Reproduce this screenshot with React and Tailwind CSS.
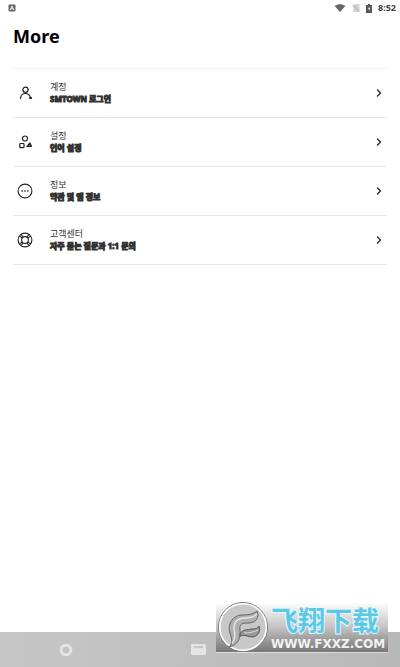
import { ChevronRight } from 'lucide-react';

function AccountIcon() {
  return (
    <svg viewBox="0 0 16 16" className="size-4" fill="none" stroke="#222" strokeWidth="1.2" strokeLinecap="round">
      <circle cx="8.500" cy="4.800" r="2.600" />
      <path d="M3.500 13.500c.2-3.500 2.200-5 5-5s4.200 1.500 5 4" />
      <path d="M13 13h1.200" strokeWidth="2" />
    </svg>
  );
}

function ShapesIcon() {
  return (
    <svg viewBox="0 0 16 16" className="size-4" fill="none" stroke="#222" strokeWidth="1.2" strokeLinejoin="round">
      <circle cx="8" cy="4.500" r="2.500" />
      <rect x="2.800" y="9.500" width="4.200" height="4.200" rx=".8" />
      <path d="M10 12.500l3-3.500 1.500 3.500z" fill="#777" />
    </svg>
  );
}

function InfoIcon() {
  return (
    <svg viewBox="0 0 16 16" className="size-4" fill="none" stroke="#222" strokeWidth="1.1" strokeLinecap="round">
      <circle cx="8" cy="8" r="6.900" />
      <path d="M5 8h.4M7.800 8h.4M10.600 8h.4" strokeWidth="1.300" />
    </svg>
  );
}

function SupportIcon() {
  return (
    <svg viewBox="0 0 16 16" className="size-4" fill="none" stroke="#222" strokeWidth="1.1">
      <circle cx="8" cy="8" r="6.900" />
      <circle cx="8" cy="8" r="3.400" />
      <path d="M2.800 4.400l2.500 1.600M4.400 2.800L6 5.300M11.600 2.800L10 5.300M13.200 4.400l-2.500 1.600M2.800 11.600l2.500-1.600M4.400 13.200L6 10.700M11.600 13.200L10 10.700M13.200 11.600l-2.500-1.600" />
    </svg>
  );
}

const menu = [
  { title: '계정', text: 'SMTOWN 로그인', Icon: AccountIcon },
  { title: '설정', text: '언어 설정', Icon: ShapesIcon },
  { title: '정보', text: '약관 및 앱 정보', Icon: InfoIcon },
  { title: '고객센터', text: '자주 묻는 질문과 1:1 문의', Icon: SupportIcon },
];

function StatusBar() {
  return (
    <div className="flex h-4 items-center justify-between pr-1 pl-2">
      <svg viewBox="0 0 8 8" className="size-2">
        <rect x=".5" y=".5" width="7" height="7" rx="1" fill="#666" />
        <path d="M2.200 6L4 2l1.800 4M3 4.800h2" fill="none" stroke="#fff" strokeWidth=".9" />
      </svg>
      <div className="flex items-center">
        <svg viewBox="0 0 12 9" className="mr-1.5 h-2 w-3">
          <path d="M0 2.200C3.500-.4 8.500-.4 12 2.200L6 9z" fill="#666" />
        </svg>
        <svg viewBox="0 0 8 9" className="mr-1.5 h-2 w-2">
          <path d="M2.500 0H8v9H1V2z" fill="#d2d2d2" />
          <path d="M0 1l8 7.500" stroke="#aaa" />
        </svg>
        <svg viewBox="0 0 6 9" className="mr-1.5 h-[9px] w-1.5">
          <path d="M2 0h2v1h2v8H0V1h2z" fill="#555" />
          <path d="M3.500 2L2 5h1.200L2.700 7.500 4.300 4.300H3.200z" fill="#fff" />
        </svg>
        <span className="text-[9px] leading-4 font-bold text-[#444]">8:52</span>
      </div>
    </div>
  );
}

function MenuRow({ title, text, Icon }) {
  return (
    <li className="border-b border-[#e6e6e6]">
      <button type="button" className="flex h-12 w-full items-center pl-1 text-left">
        <Icon />
        <span className="ml-4 flex flex-1 flex-col pl-px">
          <span className="text-[9px] leading-3 text-[#333]">{title}</span>
          <span className="text-[8px] leading-3 font-bold text-[#333] [-webkit-text-stroke:1px_#333]">{text}</span>
        </span>
        <ChevronRight className="mr-0.5 size-3 text-[#333]" strokeWidth={3} />
      </button>
    </li>
  );
}

function Watermark() {
  return (
    <div className="absolute right-3 bottom-3.5 flex h-[51px] w-[172px] items-center border-b border-[#ddd] bg-linear-to-b from-white via-[#c4c4c4] to-[#777] pl-px">
      <svg viewBox="0 0 52 52" className="size-[52px] shrink-0">
        <circle cx="26" cy="26" r="24.500" fill="#c4c4c4" stroke="#777" />
        <circle cx="26" cy="26" r="23.300" fill="#c8c8c8" stroke="#fff" strokeWidth="1.600" />
        <path d="M12 46c4-4 3-8 1-14-3-9 3-18 12-18 7 0 11-1 15-4 3 6-1 12-9 12-6 0-9 1-8 7 1 8-2 15-11 17z" fill="#b0b0b0" stroke="#666" />
        <path d="M15 42c4-4 3-9 2-14-1-7 4-11 11-11 5 0 9-1 12-4" fill="none" stroke="#e6e6e6" strokeWidth="1.400" />
        <path d="M23 33c3-5 7-4 12-5 4 0 6-1 7-3 2 5-1 10-6 11-5 0-8-3-13-1z" fill="#999" stroke="#555" />
        <path d="M27 32c5 0 10-1 14-3" fill="none" stroke="#ddd" />
      </svg>
      <div className="flex flex-1 flex-col gap-0.5 pl-0.5 whitespace-nowrap">
        <span className="font-['Noto_Sans_CJK_SC',sans-serif] text-[27px] leading-8 font-bold text-[#5cc8e8] [paint-order:stroke] [-webkit-text-stroke:2px_#e8f7fc]">飞翔下载</span>
        <span className="font-['DejaVu_Sans',sans-serif] text-[12px] leading-3 font-bold text-[#f2f2f2]">WWW.FXXZ.COM</span>
      </div>
    </div>
  );
}

export default function App() {
  return (
    <div className="relative flex min-h-screen flex-col bg-white font-['Noto_Sans','Noto_Sans_CJK_KR',sans-serif]">
      <StatusBar />
      <main className="flex-1 px-[13px]">
        <h1 className="mt-1.5 text-[18px] leading-7 font-bold text-black">More</h1>
        <ul className="mt-[18px] border-t border-[#f0f0f0]">
          {menu.map((item) => (
            <MenuRow key={item.title} {...item} />
          ))}
        </ul>
      </main>
      <nav className="grid h-[35px] grid-cols-3 items-center bg-linear-to-r from-[#c6c6c6] to-[#b8b8b8] pr-1">
        <button type="button" aria-label="Home" className="flex justify-center">
          <svg viewBox="0 0 14 14" className="size-3.5">
            <circle cx="7" cy="7" r="4.800" fill="none" stroke="#e4e4e4" strokeWidth="3" />
          </svg>
        </button>
        <button type="button" aria-label="Recent apps" className="flex justify-center">
          <svg viewBox="0 0 15 11" className="h-[11px] w-[15px]">
            <rect width="15" height="11" rx="1" fill="#e4e4e4" />
            <path d="M3 3h9" stroke="#aaa" />
          </svg>
        </button>
      </nav>
      <Watermark />
    </div>
  );
}
